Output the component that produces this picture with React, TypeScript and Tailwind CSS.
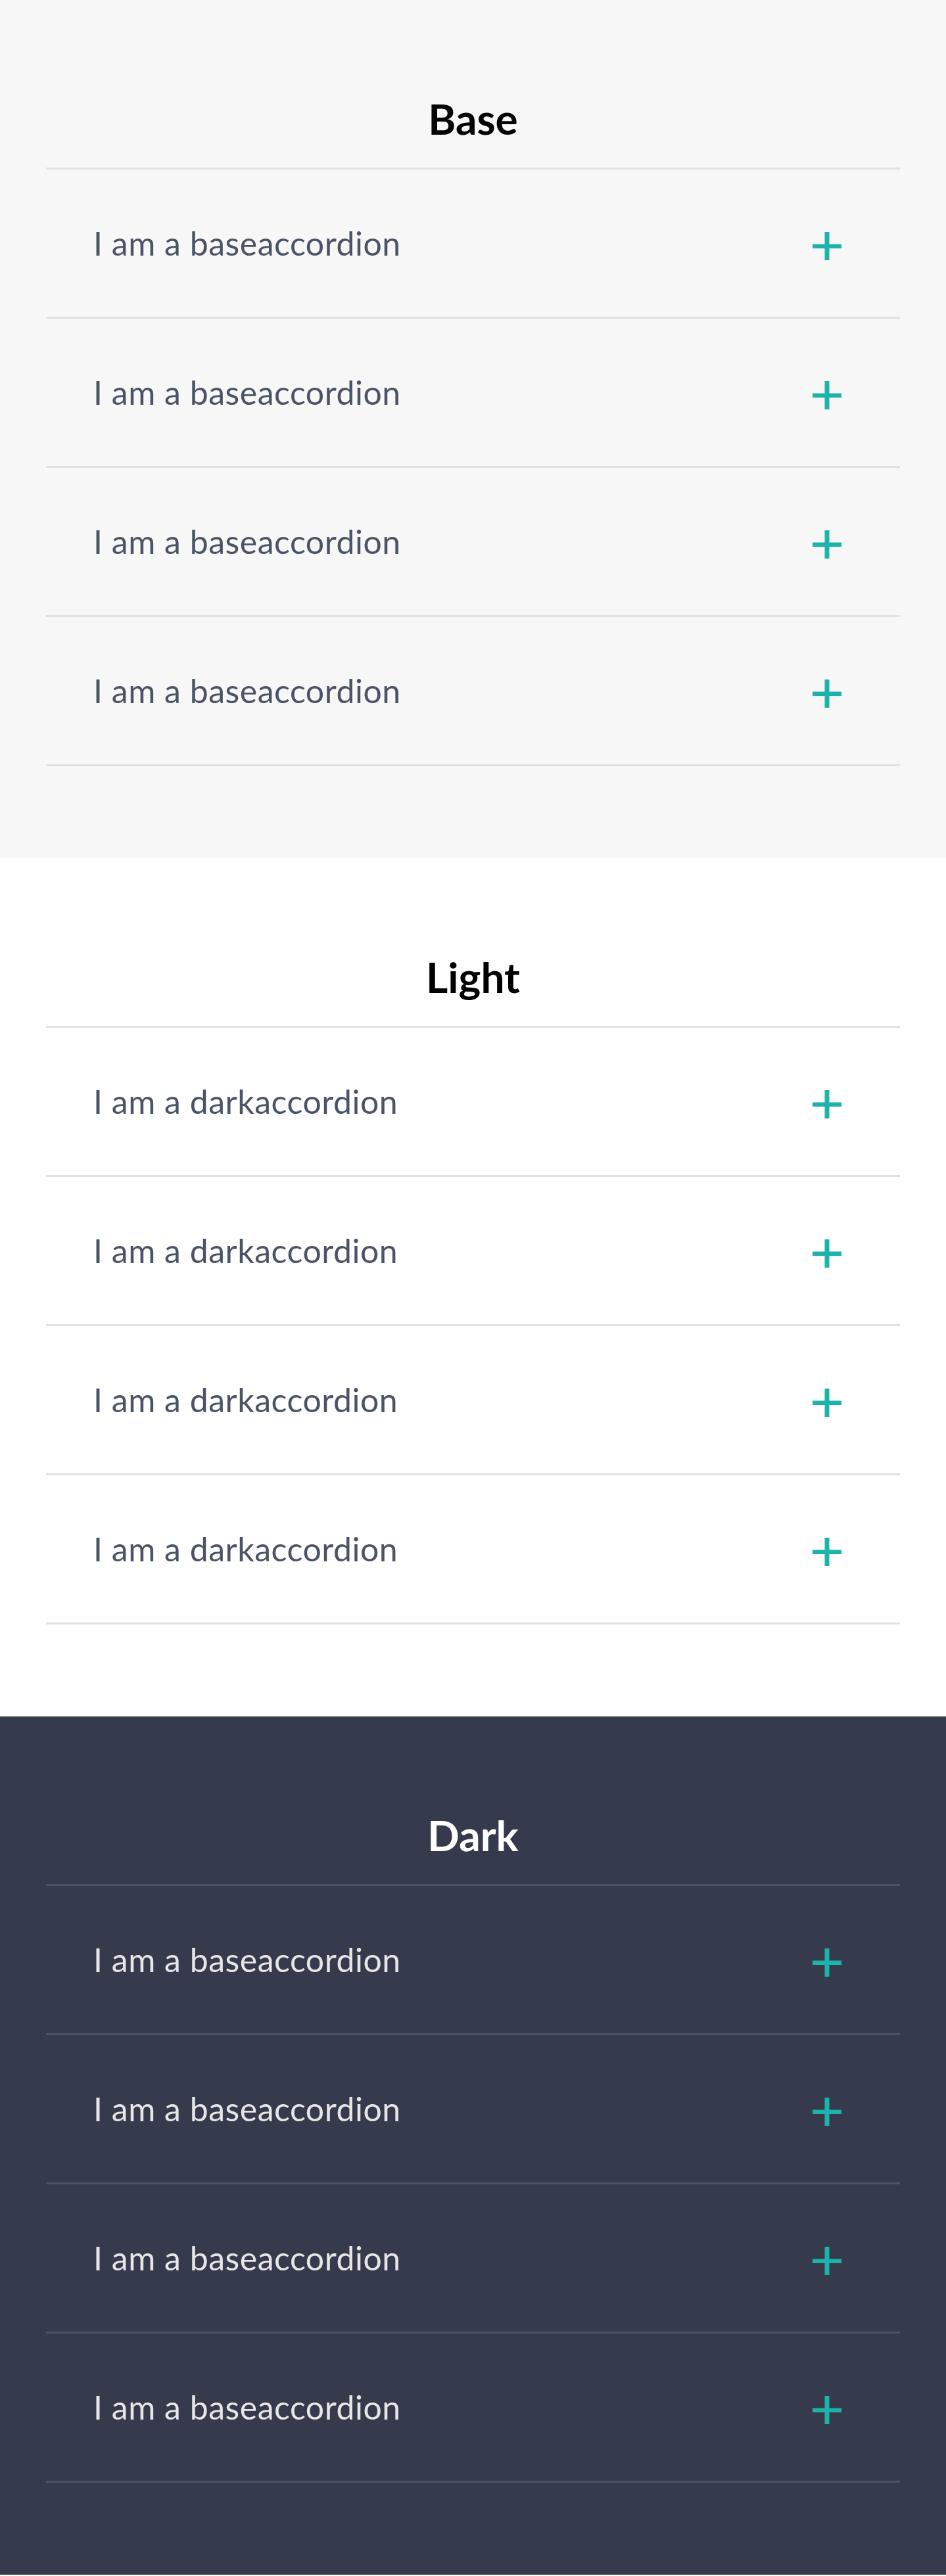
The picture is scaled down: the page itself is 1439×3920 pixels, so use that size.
import React from "react";

type Section = {
  title: string;
  label: string;
  bg: string;
  titleColor: string;
  textColor: string;
  lineColor: string;
};

const sections: Section[] = [
  {
    title: "Base",
    label: "I am a baseaccordion",
    bg: "bg-[#f7f7f7]",
    titleColor: "text-black",
    textColor: "text-[#4a5466]",
    lineColor: "border-[#e1e1e1]",
  },
  {
    title: "Light",
    label: "I am a darkaccordion",
    bg: "bg-white",
    titleColor: "text-black",
    textColor: "text-[#4a5466]",
    lineColor: "border-[#e1e1e1]",
  },
  {
    title: "Dark",
    label: "I am a baseaccordion",
    bg: "bg-[#353a4c]",
    titleColor: "text-white",
    textColor: "text-[#e6e6e6]",
    lineColor: "border-[#4b5466]",
  },
];

function Plus() {
  return (
    <svg width="44" height="43" viewBox="0 0 44 43" aria-hidden="true">
      <rect x="18.5" y="0" width="7" height="43" fill="#1db3ab" />
      <rect x="0" y="18.5" width="44" height="6.5" fill="#1db3ab" />
    </svg>
  );
}

function AccordionSection({ s }: { s: Section }) {
  return (
    <section className={`${s.bg} h-[1306px] px-[70px]`}>
      <div className="pt-[149px] pb-[43px] flex justify-center">
        <h2
          className={`${s.titleColor} text-[64px] leading-[63px] font-bold`}
          style={{ fontFamily: "Lato, 'Liberation Sans', sans-serif" }}
        >
          {s.title}
        </h2>
      </div>
      <div className={`border-t-[3px] ${s.lineColor}`}>
        {[0, 1, 2, 3].map((i) => (
          <div
            key={i}
            className={`h-[227px] border-b-[3px] ${s.lineColor} flex items-center justify-between pl-[72px] pr-[89px]`}
          >
            <span
              className={`${s.textColor} text-[50px] leading-none tracking-[0.5px]`}
              style={{ fontFamily: "Lato, 'Liberation Sans', sans-serif" }}
            >
              {s.label}
            </span>
            <div className="pt-[8px]">
              <Plus />
            </div>
          </div>
        ))}
      </div>
    </section>
  );
}

export default function App() {
  return (
    <div className="w-full">
      {sections.map((s) => (
        <AccordionSection key={s.title} s={s} />
      ))}
    </div>
  );
}
